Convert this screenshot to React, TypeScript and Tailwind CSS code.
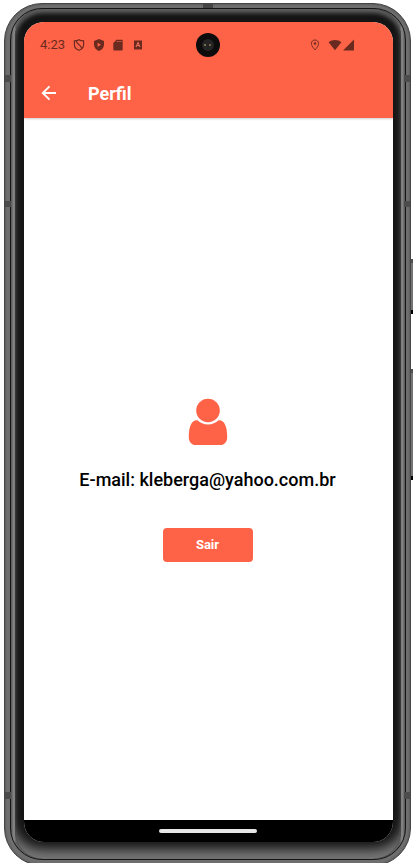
import React from "react";

const tone = "#6b2a1f";

function ShieldOff() {
  return (
    <svg viewBox="0 0 12 12" className="h-3 w-3" fill="none" stroke={tone} strokeWidth="1.2" aria-hidden="true">
      <path d="M1.400 1.900Q4.300 1.800 6 .7Q7.700 1.800 10.600 1.900V5.400C10.600 8.300 8.600 10.300 6 11.300C3.400 10.300 1.400 8.300 1.400 5.400Z" />
      <path d="M3.400 2.100C3.600 6 7.800 5 8.600 9.400" />
    </svg>
  );
}

function ShieldPlay() {
  return (
    <svg viewBox="0 0 12 12" className="h-3 w-3" aria-hidden="true">
      <path fill={tone} fillRule="evenodd" d="M1 1.900L6 0L11 1.900V5.500C11 8.500 9 11 6 12C3 11 1 8.500 1 5.500ZM4.600 3.700V7.700L8 5.700Z" />
    </svg>
  );
}

function SdCard() {
  return (
    <svg viewBox="0 0 10 12" className="h-3 w-[10px]" aria-hidden="true">
      <path fill={tone} fillRule="evenodd" d="M3.500 .8H8.800Q9.700 .8 9.700 1.700V10.500Q9.700 11.400 8.800 11.400H1.200Q.3 11.400 .3 10.500V4ZM3.800 1.900V2.900H4.800V1.900ZM5.600 1.900V2.900H6.600V1.900ZM7.400 1.900V2.900H8.400V1.900Z" />
    </svg>
  );
}

function KeyboardBadge() {
  return (
    <svg viewBox="0 0 10 12" className="h-3 w-[10px]" aria-hidden="true">
      <rect x="1" y="1.500" width="8" height="9" rx=".5" fill={tone} />
      <path d="M3 8L5 3.300L7 8M3.700 6.600H6.300" fill="none" stroke="#f07458" strokeWidth="1" />
    </svg>
  );
}

function StatusBar() {
  return (
    <div className="flex h-[46px] items-center pl-4 pr-[39px]">
      <span className="w-[33px] text-[13px] leading-4 text-[#6b2a1f]">4:23</span>
      <div className="flex items-center gap-2">
        <ShieldOff />
        <ShieldPlay />
        <SdCard />
        <span className="pl-[2px]"><KeyboardBadge /></span>
      </div>
      <div className="ml-auto flex items-center">
        <svg viewBox="0 0 10 12" className="mr-2 h-3 w-[10px]" aria-hidden="true">
          <path d="M5 1C2.900 1 1.400 2.500 1.400 4.500C1.400 7 5 11 5 11S8.600 7 8.600 4.500C8.600 2.500 7.100 1 5 1Z" fill="none" stroke={tone} />
          <circle cx="5" cy="4.500" r="1.300" fill={tone} />
        </svg>
        <svg viewBox="0 0 14 12" className="h-3 w-[14px]" aria-hidden="true">
          <path fill={tone} d="M.6 3.300C4 .2 10 .2 13.400 3.300L7 11.300Z" />
        </svg>
        <svg viewBox="0 0 12 12" className="h-3 w-3" aria-hidden="true">
          <path fill={tone} d="M12 .5V11.500H1Z" />
        </svg>
      </div>
    </div>
  );
}

function Camera() {
  return (
    <div className="flex h-6 w-6 items-center justify-center rounded-full bg-[#0c0c0c]">
      <div className="flex h-3 w-3 items-center justify-center gap-[3px] rounded-full bg-[#242424]">
        <i className="h-[2px] w-[2px] bg-[#77704a]" />
        <i className="h-[2px] w-[2px] bg-[#77604a]" />
      </div>
    </div>
  );
}

function Screen() {
  return (
    <div className="relative flex min-h-0 flex-1 flex-col overflow-hidden rounded-[20px] bg-white">
      <header className="relative z-10 bg-[#ff6347] shadow-[0_1px_2px_rgba(0,0,0,0.2)]">
        <StatusBar />
        <div className="flex h-[50px] items-center gap-[30px] pl-4">
          <button type="button" aria-label="Voltar" className="flex h-[18px] w-[18px] items-center justify-center">
            <svg viewBox="0 0 18 18" className="h-[18px] w-[18px]" fill="none" stroke="white" strokeWidth="1.900" aria-hidden="true">
              <path d="M16 9H3M9.500 2.300L2.800 9L9.500 15.700" />
            </svg>
          </button>
          <h1 className="pt-[2px] text-lg font-bold leading-6 text-white">Perfil</h1>
        </div>
      </header>
      <div className="absolute inset-x-0 top-[11px] z-20 flex justify-center pr-[2px]">
        <Camera />
      </div>
      <main className="flex flex-1 flex-col items-center justify-center pb-[2px] pr-[2px] pt-6">
        <svg viewBox="0 0 40 48" className="h-12 w-10" fill="#ff6347" aria-hidden="true">
          <circle cx="20" cy="12.500" r="11.800" />
          <path d="M9.500 22.200C12 24.800 15.800 26.400 20 26.400S28 24.800 30.500 22.200C37 21.900 39.200 29.500 39.200 39.200C39.200 43.700 36.500 47 32.300 47H7.700C3.500 47 .8 43.700 .8 39.200C.8 29.500 3 21.900 9.500 22.200Z" />
        </svg>
        <p className="mt-[22px] text-lg font-medium leading-6 text-black">E-mail: kleberga@yahoo.com.br</p>
        <button type="button" className="mt-9 h-[34px] w-[90px] rounded bg-[#ff6347] text-[13px] font-bold leading-4 text-white">
          Sair
        </button>
      </main>
      <div className="flex h-[22px] items-center justify-center bg-black pr-[2px]">
        <div className="h-1 w-[98px] rounded-full bg-[#e6e6e6]" />
      </div>
    </div>
  );
}

export default function App() {
  return (
    <div className="relative flex h-screen flex-col overflow-hidden bg-white pl-1 pr-[2px] pt-[3px] font-['Roboto','Liberation_Sans',sans-serif]">
      <div className="absolute right-0 top-[259px] h-[55px] w-1 border-y-4 border-t-[#505050] border-b-black bg-[#747474]" />
      <div className="absolute right-0 top-[369px] h-[111px] w-1 border-y-4 border-t-[#505050] border-b-black bg-[#747474]" />
      <div className="relative -mb-[3px] flex min-h-0 flex-1 flex-col rounded-[38px] border border-[#454545] bg-[#6e6e6e] pb-[5px] pl-[5px] pr-1 pt-1 shadow-[inset_0_0_2px_#404040]">
        <i className="absolute left-0 top-[71px] h-[7px] w-[6px] bg-[#4c4c4c]" />
        <i className="absolute left-0 top-[197px] h-[6px] w-[6px] bg-[#4c4c4c]" />
        <i className="absolute bottom-[66px] left-0 h-[7px] w-[6px] bg-[#4c4c4c]" />
        <i className="absolute right-0 top-[71px] h-[7px] w-[6px] bg-[#4c4c4c]" />
        <i className="absolute right-0 top-[197px] h-[6px] w-[6px] bg-[#4c4c4c]" />
        <i className="absolute bottom-[66px] right-0 h-[7px] w-[6px] bg-[#4c4c4c]" />
        <i className="absolute left-[198px] top-0 h-1 w-[10px] bg-[#444444]" />
        <div className="flex min-h-0 flex-1 flex-col rounded-[32px] border border-[#161616] bg-[linear-gradient(to_right,#555,#8a8a8a_3px,#606060_5px,#606060_calc(100%-5px),#8a8a8a_calc(100%-3px),#555)] px-1">
          <div className="flex min-h-0 flex-1 flex-col rounded-[28px] bg-[#141414] pb-[17px] pl-[9px] pr-2 pt-[13px] shadow-[inset_0_5px_4px_-1px_#606060,inset_0_-14px_12px_-4px_#777]">
            <Screen />
          </div>
        </div>
      </div>
    </div>
  );
}
